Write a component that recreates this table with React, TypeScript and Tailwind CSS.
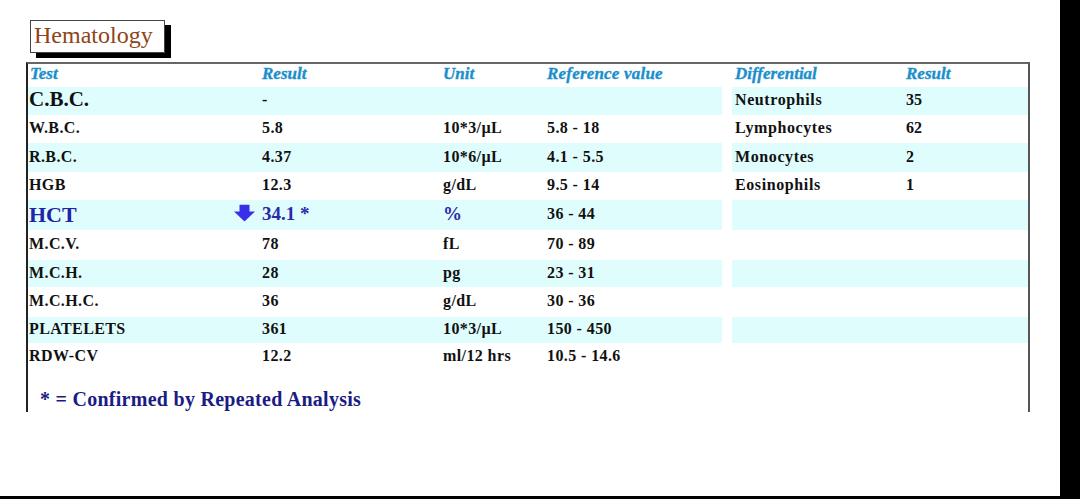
import React from "react";

type Row = {
  test: string;
  result: string;
  unit: string;
  ref: string;
  diff?: string;
  dres?: string;
  h: string;
  shaded: boolean;
  big?: "cbc" | "hct";
};

const rows: Row[] = [
  { test: "C.B.C.", result: "-", unit: "", ref: "", diff: "Neutrophils", dres: "35", h: "h-[28px]", shaded: true, big: "cbc" },
  { test: "W.B.C.", result: "5.8", unit: "10*3/µL", ref: "5.8 - 18", diff: "Lymphocytes", dres: "62", h: "h-[28px]", shaded: false },
  { test: "R.B.C.", result: "4.37", unit: "10*6/µL", ref: "4.1 - 5.5", diff: "Monocytes", dres: "2", h: "h-[29px]", shaded: true },
  { test: "HGB", result: "12.3", unit: "g/dL", ref: "9.5 - 14", diff: "Eosinophils", dres: "1", h: "h-[28px]", shaded: false },
  { test: "HCT", result: "34.1 *", unit: "%", ref: "36 - 44", h: "h-[30px]", shaded: true, big: "hct" },
  { test: "M.C.V.", result: "78", unit: "fL", ref: "70 - 89", h: "h-[30px]", shaded: false },
  { test: "M.C.H.", result: "28", unit: "pg", ref: "23 - 31", h: "h-[27px]", shaded: true },
  { test: "M.C.H.C.", result: "36", unit: "g/dL", ref: "30 - 36", h: "h-[30px]", shaded: false },
  { test: "PLATELETS", result: "361", unit: "10*3/µL", ref: "150 - 450", h: "h-[26px]", shaded: true },
  { test: "RDW-CV", result: "12.2", unit: "ml/12 hrs", ref: "10.5 - 14.6", h: "h-[27px]", shaded: false },
];

const serif = "font-['Liberation_Serif','Times_New_Roman',serif]";

function DownArrow() {
  return (
    <svg width="21" height="17" viewBox="0 0 21 17" className="absolute right-full mr-[7px] top-1/2 -translate-y-1/2">
      <rect x="5.5" y="0" width="10" height="8" fill="#3a2ee8" />
      <polygon points="0,7 21,7 10.5,17" fill="#3a2ee8" />
    </svg>
  );
}

export default function App() {
  return (
    <div className={`w-[1080px] h-[499px] flex flex-col bg-black ${serif}`}>
      <div className="flex flex-1">
        <div className="w-[1060px] bg-white pt-[20px]">
          <div className="ml-[30px] w-[135px] h-[33px] border border-[#444] bg-white shadow-[6px_5px_0_#000] flex items-center pl-[3px] pb-[3px]">
            <span className="text-[24px] leading-none text-[#8e4417]">Hematology</span>
          </div>
          <div className="ml-[26px] mt-[9px] w-[1004px] h-[350px] border-t-2 border-l-2 border-r-2 border-t-[#666] border-l-[#222] border-r-[#555] box-border">
            {/* header */}
            <div className="flex h-[23px] items-center pb-[4px] text-[17px] font-bold italic text-[#1b8fcb] [-webkit-text-stroke:0.35px_#1b8fcb]">
              <div className="w-[694px] flex">
                <div className="w-[234px] pl-[2px]">Test</div>
                <div className="w-[181px]">Result</div>
                <div className="w-[104px]">Unit</div>
                <div className="flex-1 tracking-[0.2px]">Reference value</div>
              </div>
              <div className="w-[296px] ml-[10px] flex">
                <div className="w-[174px] pl-[3px]">Differential</div>
                <div className="flex-1">Result</div>
              </div>
            </div>
            {rows.map((r, i) => {
              const bg = r.shaded ? "bg-[#e0fdfe]" : "bg-white";
              const testCls =
                r.big === "cbc"
                  ? "text-[21px] text-[#111]"
                  : r.big === "hct"
                  ? "text-[22px] text-[#2323a6]"
                  : "text-[16px] text-[#111] tracking-[0.4px]";
              const resCls = r.big === "hct" ? "text-[19px] text-[#2a2aa8]" : "text-[16px] text-[#111] tracking-[0.4px]";
              const unitCls = r.big === "hct" ? "text-[19px] text-[#2a2aa8]" : "text-[16px] text-[#111] tracking-[0.4px]";
              return (
                <div key={i} className={`flex ${r.h} font-bold`}>
                  <div className={`w-[694px] flex items-center pb-[2px] ${bg}`}>
                    <div className={`w-[234px] pl-[1px] ${testCls}`}>{r.test}</div>
                    <div className={`w-[181px] ${resCls}`}>
                      <span className="relative">
                        {r.big === "hct" && <DownArrow />}
                        {r.result}
                      </span>
                    </div>
                    <div className={`w-[104px] ${unitCls}`}>{r.unit}</div>
                    <div className="flex-1 text-[16px] text-[#111] tracking-[0.4px]">{r.ref}</div>
                  </div>
                  <div className={`w-[296px] ml-[10px] flex items-center pb-[2px] ${i < 9 ? bg : "bg-white"}`}>
                    <div className="w-[174px] pl-[3px] text-[16px] text-[#111] tracking-[0.6px]">{r.diff ?? ""}</div>
                    <div className="flex-1 text-[16px] text-[#111]">{r.dres ?? ""}</div>
                  </div>
                </div>
              );
            })}
            <div className="mt-[17px] pl-[12px] text-[20px] font-bold text-[#1b1b84] leading-[24px] tracking-[0.27px]">
              * = Confirmed by Repeated Analysis
            </div>
          </div>
        </div>
        <div className="w-[20px] bg-black" />
      </div>
      <div className="h-[3px] bg-black" />
    </div>
  );
}
